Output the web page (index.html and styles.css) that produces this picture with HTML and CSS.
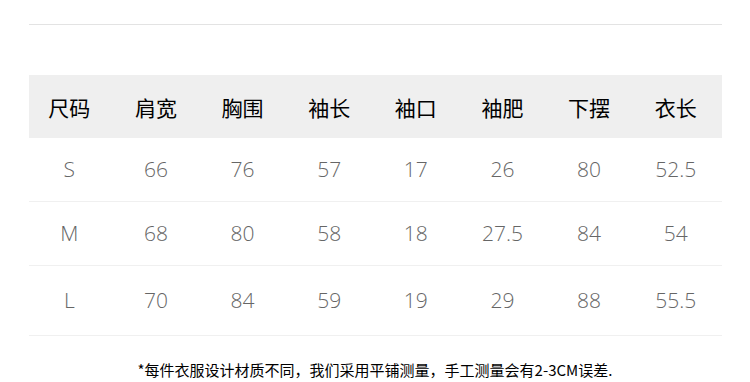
FILE: index.html
```html
<!DOCTYPE html>
<html lang="zh-CN">
<head>
<meta charset="utf-8">
<title>尺码表</title>
<link rel="stylesheet" href="styles.css">
</head>
<body>
<div class="page">
  <div class="rule"></div>
  <table class="size-table">
    <thead>
      <tr class="head-row">
        <th>尺码</th><th>肩宽</th><th>胸围</th><th>袖长</th><th>袖口</th><th>袖肥</th><th>下摆</th><th>衣长</th>
      </tr>
    </thead>
    <tbody>
      <tr class="row row-1">
        <td>S</td><td>66</td><td>76</td><td>57</td><td>17</td><td>26</td><td>80</td><td>52.5</td>
      </tr>
      <tr class="row row-2">
        <td>M</td><td>68</td><td>80</td><td>58</td><td>18</td><td>27.5</td><td>84</td><td>54</td>
      </tr>
      <tr class="row row-3">
        <td>L</td><td>70</td><td>84</td><td>59</td><td>19</td><td>29</td><td>88</td><td>55.5</td>
      </tr>
    </tbody>
  </table>
  <p class="note">*每件衣服设计材质不同，我们采用平铺测量，手工测量会有2-3CM误差.</p>
</div>
</body>
</html>
```

FILE: styles.css
```css
html, body {
  margin: 0;
  padding: 0;
  background: #fff;
}

.page {
  width: 693px;
  margin: 0 0 0 29px;
  padding-top: 24px;
}

.rule {
  height: 0;
  border-top: 1px solid #e3e3e3;
}

.size-table {
  width: 693px;
  margin-top: 50px;
  border-collapse: collapse;
  table-layout: fixed;
}

.size-table th,
.size-table td {
  padding: 0 6px 0 0;
  text-align: center;
  vertical-align: middle;
}

.head-row {
  background: #efefef;
  height: 63px;
}

.head-row th {
  font-family: "Noto Sans CJK SC", "Noto Sans", sans-serif;
  font-weight: 400;
  font-size: 21px;
  color: #000;
}

.row td {
  font-family: "Open Sans", "Noto Sans", sans-serif;
  font-weight: 300;
  font-size: 21px;
  color: #666;
  border-bottom: 1px solid #f0f0f0;
}

.row-1 { height: 63px; }
.row-2 { height: 64px; }
.row-3 { height: 70px; }

.note {
  margin: 24px 0 0 -29px;
  width: 750px;
  text-align: center;
  font-family: "Noto Sans CJK SC", "Noto Sans", sans-serif;
  font-size: 15px;
  line-height: 20px;
  color: #000;
}
```
